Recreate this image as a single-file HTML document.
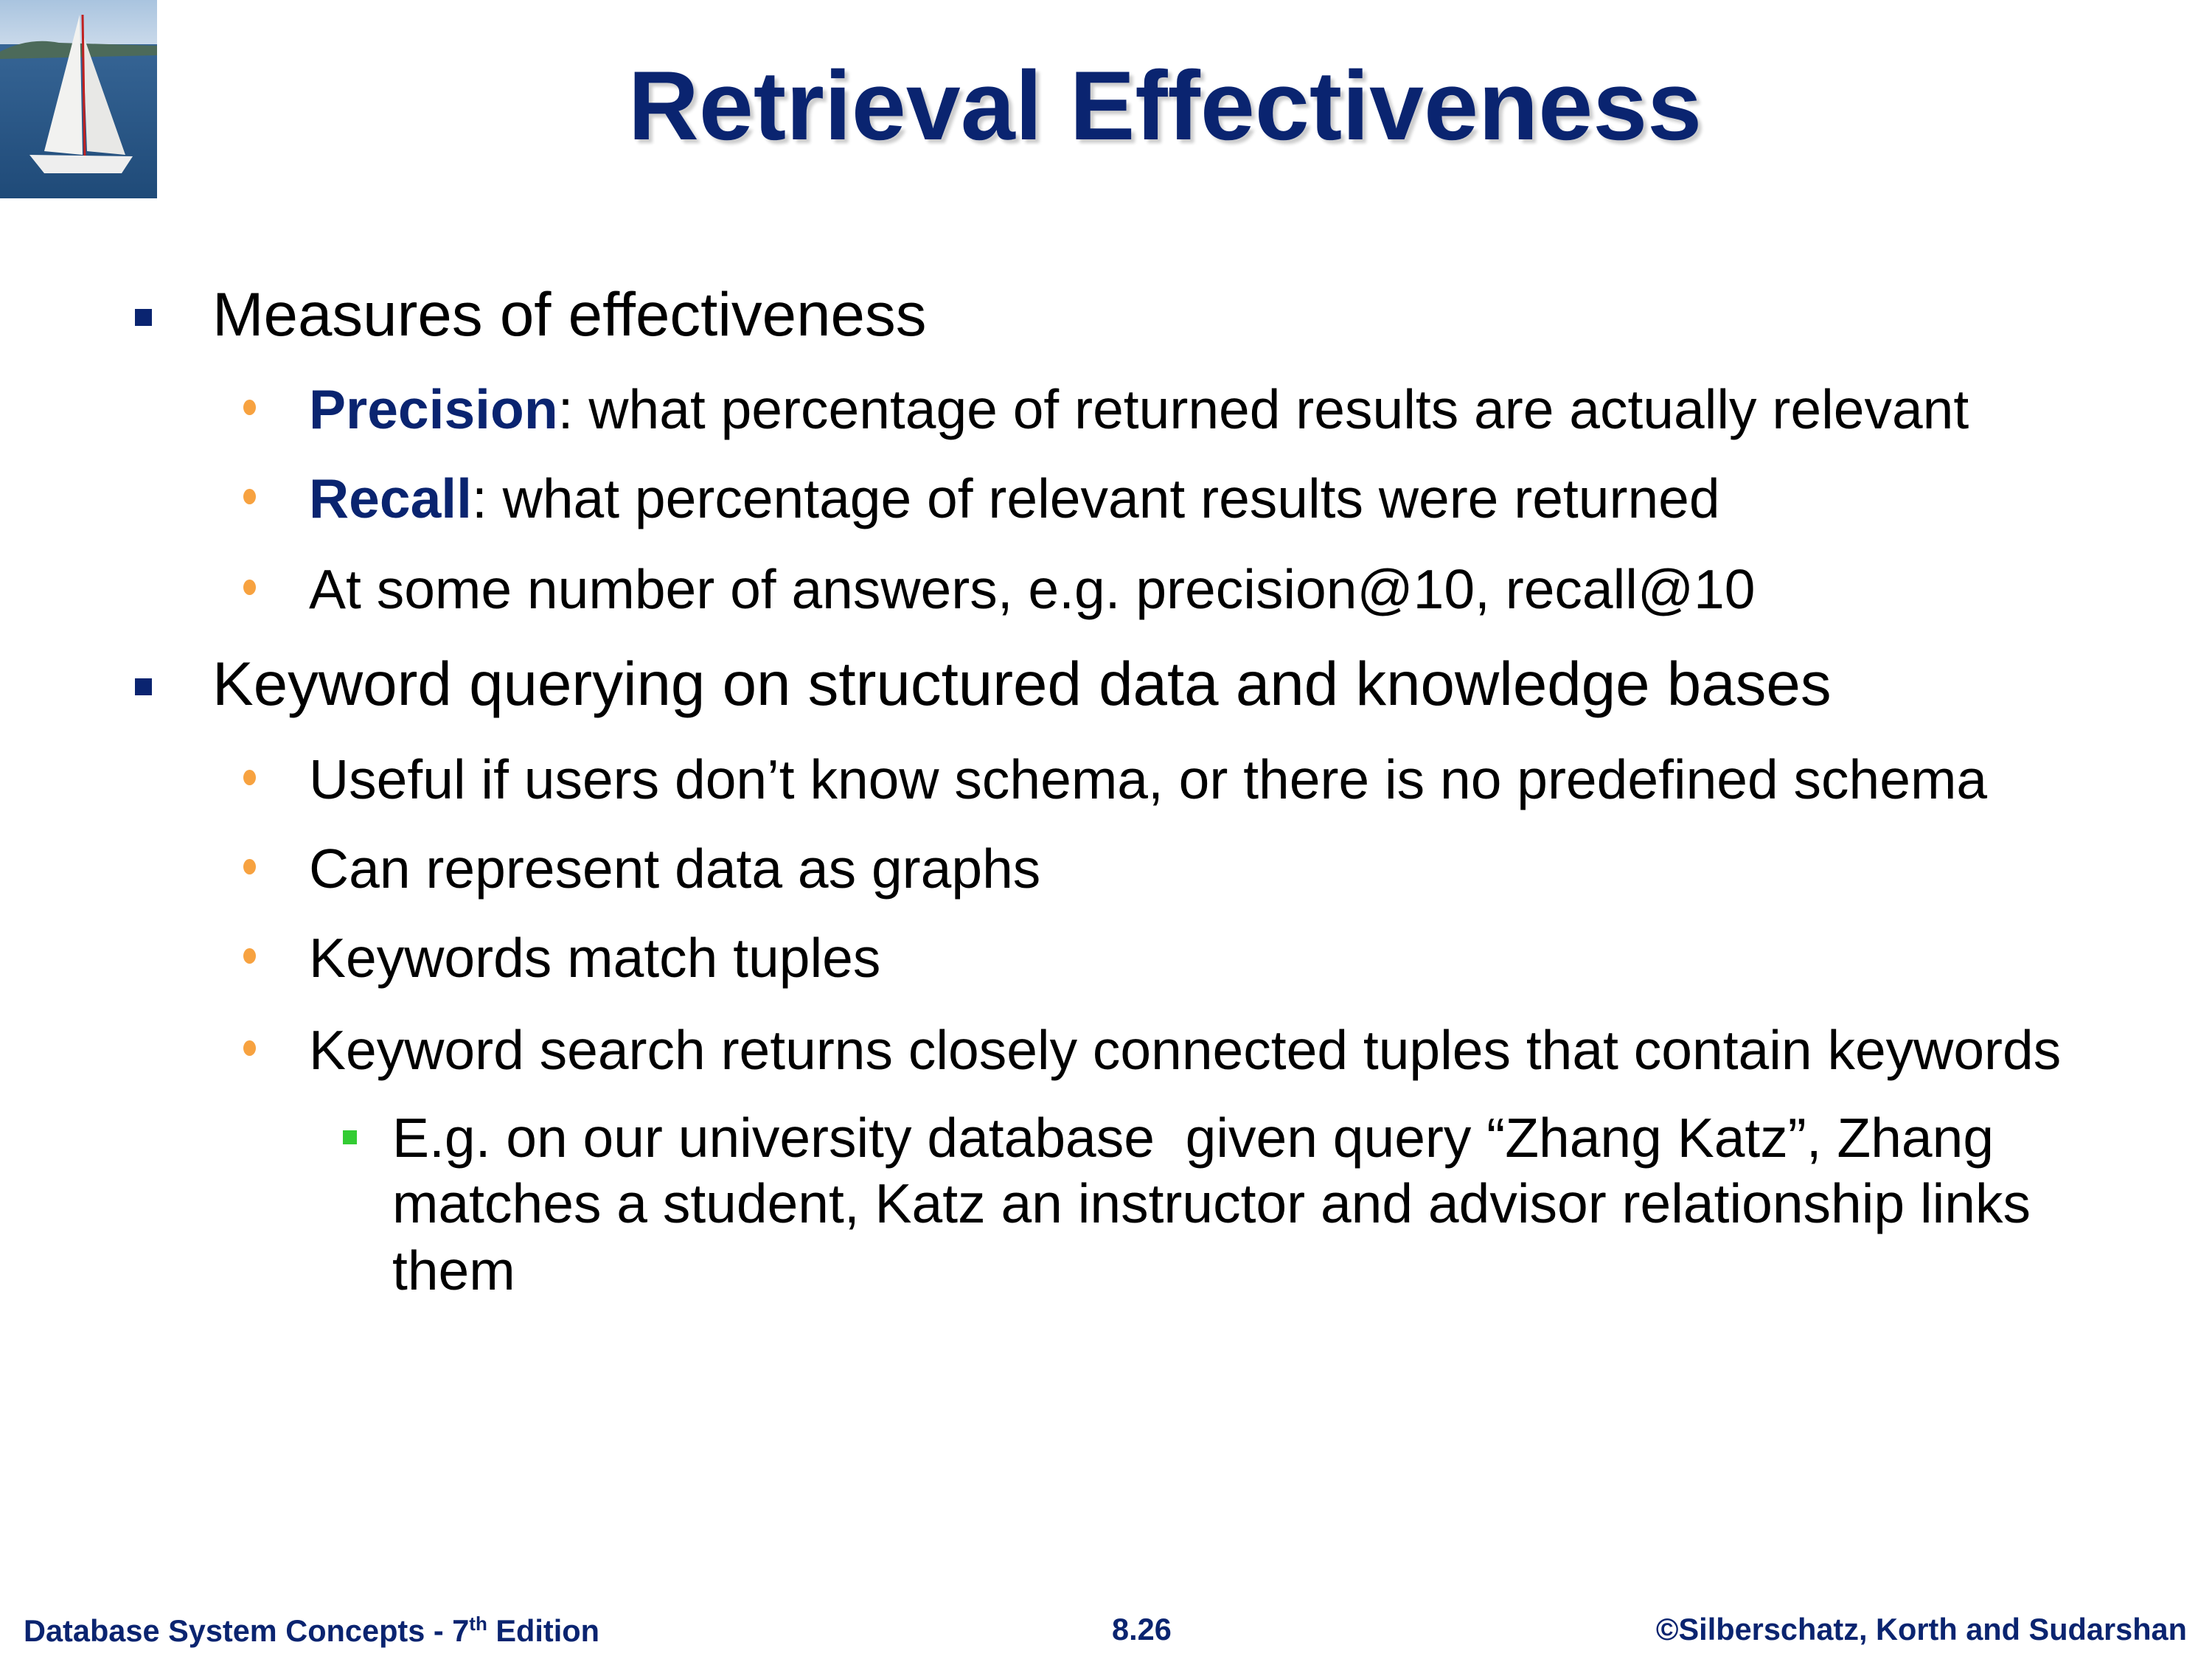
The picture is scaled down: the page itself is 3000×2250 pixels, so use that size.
<!DOCTYPE html>
<html><head><meta charset="utf-8"><style>
body{margin:0;width:3000px;height:2250px;background:#fff;position:relative;overflow:hidden;font-family:"Liberation Sans",Arial,sans-serif;}
.t{position:absolute;white-space:nowrap;line-height:1;}
.l1{font-size:83.5px;left:288px;color:#000;}
.l2{font-size:75px;left:419px;color:#000;}
.l3{font-size:75px;left:532px;color:#000;}
.b{color:#0a2470;font-weight:bold;}
.sq{position:absolute;width:23px;height:23px;background:#0a2470;left:183px;}
.ob{position:absolute;width:17px;height:21px;border-radius:50%;background:#f7a240;left:330px;}
.gs{position:absolute;width:19px;height:19px;background:#33cc33;left:465px;}
.f{position:absolute;font-size:41.5px;font-weight:bold;color:#0a2470;line-height:1;top:2189px;white-space:nowrap;}
</style></head><body>
<svg style="position:absolute;left:0;top:0" width="213" height="269" viewBox="0 0 213 269">
<defs><linearGradient id="sky" x1="0" y1="0" x2="0" y2="1"><stop offset="0" stop-color="#a9c4df"/><stop offset="1" stop-color="#c9d9ea"/></linearGradient>
<linearGradient id="sea" x1="0" y1="0" x2="0" y2="1"><stop offset="0" stop-color="#3d6d9e"/><stop offset="1" stop-color="#1f4a78"/></linearGradient></defs>
<rect width="213" height="269" fill="url(#sea)"/>
<rect width="213" height="60" fill="url(#sky)"/>
<path d="M0 70 Q40 50 80 58 L213 62 L213 75 L0 80Z" fill="#4c6a5a"/>
<path d="M108 20 L112 210 L60 205 Z" fill="#f2f2f0"/>
<path d="M112 45 L118 205 L170 210 Z" fill="#e8e8e6"/>
<line x1="112" y1="20" x2="115" y2="215" stroke="#c02020" stroke-width="3"/>
<path d="M40 210 L180 212 L165 235 L60 235Z" fill="#eeeeee"/>
</svg>
<div class="t" style="top:78px;left:0;width:3160px;text-align:center;font-size:133px;font-weight:bold;color:#0a2470;text-shadow:5px 5px 4px rgba(0,0,0,0.2);">Retrieval Effectiveness</div>

<div class="sq" style="top:419px"></div>
<div class="t l1" style="top:385px">Measures of effectiveness</div>
<div class="ob" style="top:542px"></div>
<div class="t l2" style="top:518px"><span class="b">Precision</span>: what percentage of returned results are actually relevant</div>
<div class="ob" style="top:663px"></div>
<div class="t l2" style="top:639px"><span class="b">Recall</span>: what percentage of relevant results were returned</div>
<div class="ob" style="top:786px"></div>
<div class="t l2" style="top:762px">At some number of answers, e.g. precision@10, recall@10</div>

<div class="sq" style="top:920px"></div>
<div class="t l1" style="top:886px">Keyword querying on structured data and knowledge bases</div>
<div class="ob" style="top:1044px"></div>
<div class="t l2" style="top:1020px">Useful if users don’t know schema, or there is no predefined schema</div>
<div class="ob" style="top:1165px"></div>
<div class="t l2" style="top:1141px">Can represent data as graphs</div>
<div class="ob" style="top:1286px"></div>
<div class="t l2" style="top:1262px">Keywords match tuples</div>
<div class="ob" style="top:1411px"></div>
<div class="t l2" style="top:1387px">Keyword search returns closely connected tuples that contain keywords</div>
<div class="gs" style="top:1533px"></div>
<div class="t l3" style="top:1506px">E.g. on our university database&nbsp; given query “Zhang Katz”, Zhang</div>
<div class="t l3" style="top:1595px">matches a student, Katz an instructor and advisor relationship links</div>
<div class="t l3" style="top:1686px">them</div>

<div class="f" style="left:32px">Database System Concepts - 7<sup style="font-size:26px;vertical-align:15px">th</sup> Edition</div>
<div class="f" style="left:1508px">8.26</div>
<div class="f" style="right:34px">©Silberschatz, Korth and Sudarshan</div>
</body></html>
